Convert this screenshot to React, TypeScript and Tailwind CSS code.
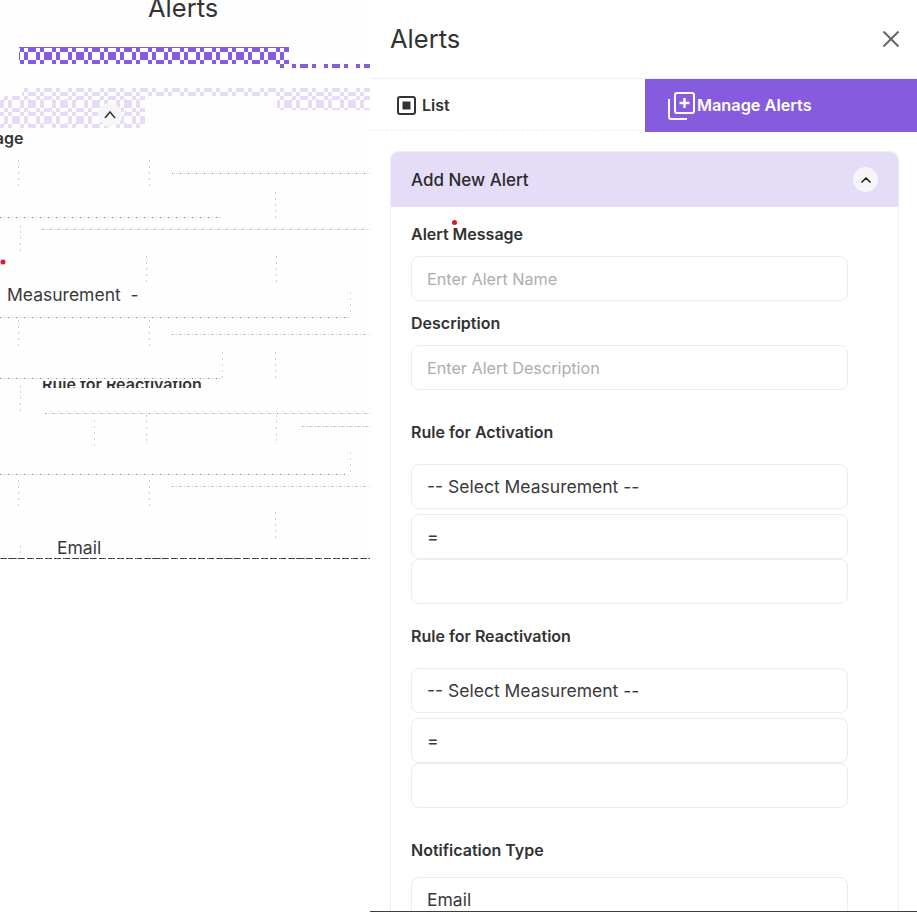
import { ChevronUp } from "lucide-react";

const fieldClass =
  "block h-[45px] w-[437px] rounded-lg border border-[#e9ebf5] bg-white px-[15px] pt-[2px] text-[17.5px] text-[#3a3a3a] outline-none appearance-none";
const inputClass =
  "block h-[45px] w-[437px] rounded-lg border border-[#e9ebf5] bg-white px-[15px] text-[16.2px] text-[#3a3a3a] outline-none placeholder:text-[#adadad]";
const labelClass = "block h-6 text-[16px] leading-6 font-semibold text-[#333333]";

// leftovers of the repainted panel: [x1, y1, x2, y2]
const ghostRows = [
  [172, 173, 370, 173],
  [0, 217, 222, 217],
  [42, 229, 370, 229],
  [0, 317, 350, 317],
  [172, 334, 370, 334],
  [0, 378, 222, 378],
  [45, 413, 370, 413],
  [302, 426, 370, 426],
  [0, 474, 345, 474],
  [172, 486, 370, 486],
  [0, 558, 370, 558],
];

const ghostCols = [
  [18, 160, 18, 188],
  [149, 160, 149, 188],
  [275, 192, 275, 220],
  [20, 225, 20, 252],
  [146, 256, 146, 285],
  [276, 256, 276, 285],
  [350, 292, 350, 316],
  [18, 320, 18, 348],
  [149, 320, 149, 348],
  [222, 352, 222, 378],
  [275, 352, 275, 380],
  [20, 385, 20, 412],
  [94, 420, 94, 447],
  [146, 415, 146, 445],
  [276, 415, 276, 445],
  [350, 452, 350, 474],
  [18, 480, 18, 508],
  [149, 480, 149, 508],
  [275, 512, 275, 540],
  [20, 545, 20, 557],
];

// checker strips: [x, y, width, height, pattern]
const checkerRows: [number, number, number, number, string][] = [
  [19, 48, 270, 4, "purpleB"],
  [19, 52, 270, 8, "purpleA"],
  [19, 60, 270, 4, "purpleB"],
  [277, 64, 93, 4, "purpleA"],
  [22, 88, 348, 4, "lavB"],
  [22, 92, 348, 4, "lavA"],
  [0, 96, 145, 4, "lavB"],
  [0, 100, 145, 8, "lavA"],
  [0, 108, 145, 4, "lavB"],
  [0, 112, 145, 4, "lavA"],
  [0, 116, 145, 8, "lavB"],
  [0, 124, 145, 4, "lavA"],
  [277, 96, 93, 4, "lavB"],
  [277, 100, 93, 8, "lavA"],
  [277, 108, 93, 2, "lavB"],
];

function CheckerPattern({ id, phase, color, inverse }: { id: string; phase: number; color: string; inverse?: boolean }) {
  const spans = inverse
    ? [[8, 4], [16, 8], [28, 4]]
    : [[0, 8], [12, 4], [24, 4]];
  return (
    <pattern id={id} x={phase} y="0" width="32" height="4" patternUnits="userSpaceOnUse">
      {spans.map(([x, w]) => (
        <rect key={x} x={x} y="0" width={w} height="4" fill={color} />
      ))}
    </pattern>
  );
}

function GhostLayer() {
  return (
    <svg className="absolute inset-0" width="370" height="560" viewBox="0 0 370 560" shapeRendering="crispEdges">
      <defs>
        <pattern id="pinkDots" width="8" height="8" patternUnits="userSpaceOnUse">
          <rect x="3" y="3" width="1" height="1" fill="#ffdcfa" />
        </pattern>
        <pattern id="magentaDots" width="12" height="12" patternUnits="userSpaceOnUse">
          <rect x="5" y="3" width="1" height="1" fill="#ff9cf4" />
        </pattern>
        <CheckerPattern id="purpleA" phase={12} color="#875bdd" />
        <CheckerPattern id="purpleB" phase={12} color="#875bdd" inverse />
        <CheckerPattern id="lavA" phase={28} color="#e5dcf7" />
        <CheckerPattern id="lavB" phase={28} color="#e5dcf7" inverse />
      </defs>
      <rect width="370" height="560" fill="url(#pinkDots)" />
      {checkerRows.map(([x, y, w, h, fill]) => (
        <rect key={`${x}-${y}`} x={x} y={y} width={w} height={h} fill={`url(#${fill})`} />
      ))}
      <rect x="19" y="47" width="270" height="1" fill="#875bdd" />
      <rect x="0" y="88" width="145" height="40" fill="url(#magentaDots)" />
      <rect x="277" y="88" width="93" height="22" fill="url(#magentaDots)" />
      <circle cx="110" cy="115" r="12" fill="#f6f6f8" />
      <path d="M105 118 L110 112 L115 118" fill="none" stroke="#333333" strokeWidth="1.5" shapeRendering="auto" />
      {ghostRows.map(([x1, y1, x2, y2]) => (
        <g key={`${x1}-${y1}`}>
          <line x1={x1} y1={y1} x2={x2} y2={y2} stroke={y1 === 558 ? "#3d3d3d" : "#e9ebf5"} strokeDasharray={y1 === 558 ? "7 2" : undefined} />
          <line x1={x1} y1={y1} x2={x2} y2={y2} stroke="#6f8f6f" strokeDasharray="1 7" />
        </g>
      ))}
      {ghostCols.map(([x1, y1, x2, y2]) => (
        <line key={`${x1}-${y1}`} x1={x1} y1={y1} x2={x2} y2={y2} stroke="#c9cbe8" strokeDasharray="2 4" />
      ))}
      <circle cx="3" cy="262" r="2.5" fill="#e8112d" shapeRendering="auto" />
    </svg>
  );
}

function GhostPane() {
  return (
    <div className="relative h-full w-[370px] shrink-0 overflow-hidden bg-white">
      <GhostLayer />
      <span className="absolute left-[148px] top-[-8px] text-[25.5px] leading-8 text-[#333333]">Alerts</span>
      <span className="absolute left-[-47px] top-[126px] text-[16px] leading-6 font-semibold text-[#333333]">Message</span>
      <span className="absolute left-[7px] top-[283px] whitespace-pre text-[17.5px] leading-6 text-[#3a3a3a]">Measurement  -</span>
      <div className="absolute left-[170px] top-[189px] h-[4px] w-[70px] overflow-hidden">
        <span className="block text-[16px] leading-6 font-semibold text-[#333333]">Description</span>
      </div>
      <div className="absolute left-[42px] top-[381px] h-[7px] w-[160px] overflow-hidden">
        <span className="-mt-[9px] block whitespace-nowrap text-[16px] leading-6 font-semibold text-[#333333]">Rule for Reactivation</span>
      </div>
      <span className="absolute left-[57px] top-[536px] text-[17.5px] leading-6 text-[#3a3a3a]">Email</span>
    </div>
  );
}

function ListIcon() {
  return (
    <svg width="19" height="19" viewBox="0 0 19 19" fill="none">
      <rect x="1" y="1" width="17" height="17" rx="2" stroke="#333333" strokeWidth="2" />
      <rect x="5.5" y="5.5" width="8" height="8" fill="#333333" />
    </svg>
  );
}

function ManageIcon() {
  return (
    <svg width="27" height="28" viewBox="0 0 27 28" fill="none" stroke="#ffffff" strokeWidth="2">
      <rect x="7" y="1" width="19" height="20" rx="2" />
      <path d="M1 7V25a2 2 0 0 0 2 2H19" />
      <path d="M16.5 6V16M11.5 11H21.5" strokeWidth="2.4" />
    </svg>
  );
}

function RuleFields() {
  return (
    <>
      <select className={`mt-5 ${fieldClass}`} defaultValue="">
        <option value="">-- Select Measurement --</option>
      </select>
      <select className={`mt-[5px] ${fieldClass}`} defaultValue="=">
        <option value="=">=</option>
      </select>
      <input className={fieldClass} type="text" />
    </>
  );
}

export default function App() {
  return (
    <div className="flex h-[912px] w-[917px] overflow-hidden bg-white font-['Inter',sans-serif]">
      <GhostPane />
      <div className="h-full w-[547px] shrink-0 overflow-hidden border-b border-[#3d3d3d]">
        <div className="flex h-[78px] items-center justify-between pl-5 pr-[18px]">
          <h1 className="-mt-[1px] text-[25.5px] leading-8 font-normal text-[#333333]">Alerts</h1>
          <button type="button" aria-label="Close">
            <svg className="block" width="16" height="16" viewBox="0 0 16 16" stroke="#666666" strokeWidth="2">
              <path d="M0.5 0.5L15.5 15.5M15.5 0.5L0.5 15.5" />
            </svg>
          </button>
        </div>

        <div className="flex h-[54px] border-t border-[#efefef]">
          <button type="button" className="flex h-[52px] w-[275px] items-center gap-[6px] border-b border-dashed border-[#eeeeee] pl-[27px] pt-[1px] text-[16px] font-semibold text-[#333333]">
            <ListIcon />
            List
          </button>
          <button type="button" className="flex h-[53px] w-[272px] items-center gap-[2px] bg-[#875bdd] pl-[23px] text-[16.3px] font-semibold text-white">
            <ManageIcon />
            Manage Alerts
          </button>
        </div>

        <div className="pl-5 pr-[18px] pt-[19px]">
          <div className="rounded-t-lg border border-[#eeeff8]">
            <div className="flex h-[55px] items-center justify-between rounded-t-lg bg-[#e5dcf7] pl-5 pr-5">
              <span className="pt-[2px] text-[17px] font-medium text-[#2b2b2b]">Add New Alert</span>
              <span className="flex size-[25px] items-center justify-center rounded-full bg-[#f6f6f8]">
                <ChevronUp size={16} strokeWidth={2.5} color="#222222" />
              </span>
            </div>
            <div className="relative h-[800px] pl-5 pt-[15px]">
              <span className="absolute left-[61px] top-[13px] size-[5px] rounded-full bg-[#e8112d]" />
              <label className={labelClass}>Alert Message</label>
              <input className={`mt-[10px] ${inputClass}`} type="text" placeholder="Enter Alert Name" />
              <label className={`mt-[10px] ${labelClass}`}>Description</label>
              <input className={`mt-[10px] ${inputClass}`} type="text" placeholder="Enter Alert Description" />
              <label className={`mt-[30px] ${labelClass}`}>Rule for Activation</label>
              <RuleFields />
              <label className={`mt-5 ${labelClass}`}>Rule for Reactivation</label>
              <RuleFields />
              <label className={`mt-[30px] ${labelClass}`}>Notification Type</label>
              <select className={`mt-[15px] ${fieldClass}`} defaultValue="email">
                <option value="email">Email</option>
              </select>
            </div>
          </div>
        </div>
      </div>
    </div>
  );
}
